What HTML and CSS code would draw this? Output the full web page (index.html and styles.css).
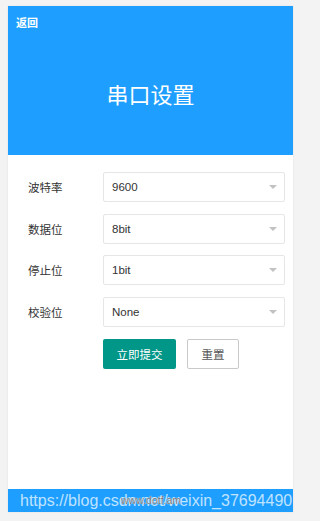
FILE: index.html
```html
<!DOCTYPE html>
<html lang="zh-CN">
<head>
<meta charset="utf-8">
<title>串口设置</title>
<link rel="stylesheet" href="styles.css">
</head>
<body>
<div class="card">
  <header class="header">
    <a class="back">返回</a>
    <h1 class="title">串口设置</h1>
  </header>
  <form class="form">
    <div class="row">
      <label class="label">波特率</label>
      <div class="select"><span class="value">9600</span><i class="arrow"></i></div>
    </div>
    <div class="row">
      <label class="label">数据位</label>
      <div class="select"><span class="value">8bit</span><i class="arrow"></i></div>
    </div>
    <div class="row">
      <label class="label">停止位</label>
      <div class="select"><span class="value">1bit</span><i class="arrow"></i></div>
    </div>
    <div class="row">
      <label class="label">校验位</label>
      <div class="select"><span class="value">None</span><i class="arrow"></i></div>
    </div>
    <div class="actions">
      <button type="button" class="btn btn-primary">立即提交</button>
      <button type="button" class="btn btn-reset">重置</button>
    </div>
  </form>
  <footer class="footer">
    <span class="url">https://blog.csdn.net/weixin_37694490</span>
    <span class="mark">www.dotf.am</span>
  </footer>
</div>
</body>
</html>
```

FILE: styles.css
```css
* { box-sizing: border-box; }
html, body { margin: 0; padding: 0; }
body {
  background: #f3f3f3;
  padding: 6px 8px 9px;
  font-family: "Liberation Sans", "Noto Sans CJK SC", sans-serif;
  color: #333;
}
.card {
  width: 285px;
  height: 506px;
  background: #fff;
  display: flex;
  flex-direction: column;
  box-shadow: 0 0 2px rgba(0,0,0,0.08);
}
.header {
  height: 149px;
  background: #1e9fff;
  color: #fff;
  padding: 10px 8px 0;
  display: flex;
  flex-direction: column;
}
.back {
  font-size: 11px;
  line-height: 14px;
  font-weight: 600;
  color: #fff;
  align-self: flex-start;
}
.title {
  margin: 51px 0 0;
  font-size: 22px;
  line-height: 30px;
  font-weight: normal;
  text-align: center;
}
.form {
  flex: 1;
  margin: 0;
  padding: 17px 8px 0 20px;
  display: flex;
  flex-direction: column;
  gap: 11.7px;
}
.row {
  display: grid;
  grid-template-columns: 75px 1fr;
  align-items: center;
  height: 30px;
}
.label {
  font-size: 11.5px;
  color: #333;
}
.select {
  position: relative;
  height: 30px;
  border: 1px solid #e6e6e6;
  border-radius: 2px;
  display: flex;
  align-items: center;
  padding-left: 8px;
}
.value {
  font-size: 11.5px;
  color: #333;
}
.arrow {
  position: absolute;
  right: 7px;
  top: 50%;
  margin-top: -2px;
  width: 0;
  height: 0;
  border-left: 4.5px solid transparent;
  border-right: 4.5px solid transparent;
  border-top: 4.5px solid #c2c2c2;
}
.actions {
  display: flex;
  gap: 11px;
  padding-left: 75px;
}
.btn {
  height: 30px;
  padding: 0 13.5px;
  font-family: inherit;
  font-size: 11.5px;
  border-radius: 2px;
  cursor: pointer;
}
.btn-primary {
  background: #009688;
  color: #fff;
  border: none;
  width: 73px;
}
.btn-reset {
  background: #fff;
  color: #555;
  border: 1px solid #c9c9c9;
  width: 52px;
  padding: 0;
}
.footer {
  position: relative;
  height: 23px;
  background: #1e9fff;
  padding-left: 12px;
  overflow: hidden;
  white-space: nowrap;
}
.url {
  font-size: 16px;
  line-height: 23px;
  color: rgba(255,255,255,0.72);
}
.mark {
  position: absolute;
  left: 113px;
  top: 4px;
  font-size: 10.5px;
  line-height: 14px;
  color: rgba(70,70,70,0.75);
  text-shadow: 0 0 1px #fff, 0 0 1px #fff;
}
```
